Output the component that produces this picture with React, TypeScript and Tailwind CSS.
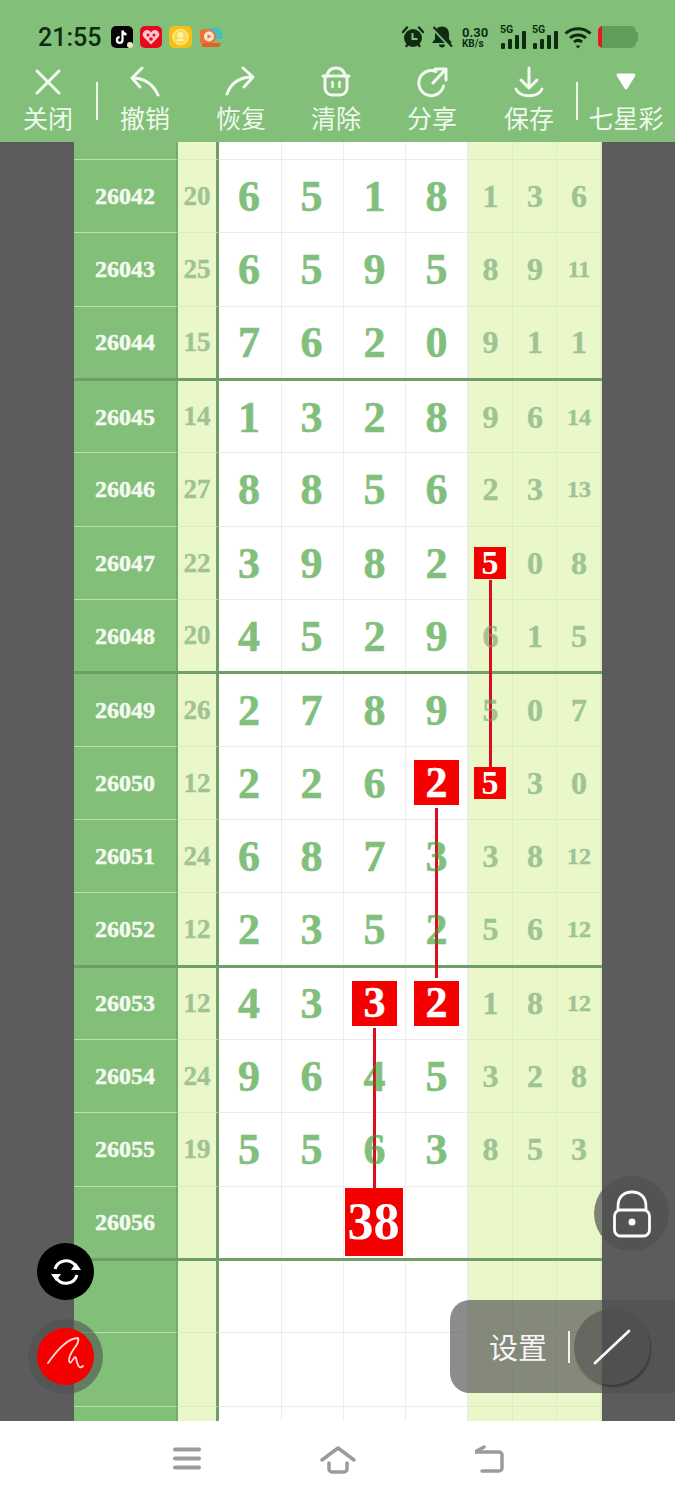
import { clsx } from "clsx";

type Row = {
  issue: string;
  sum: string;
  main: string[];
  side: string[];
  hitMain?: number[];
  hitSide?: number;
  thick?: boolean;
  big?: string;
};

const rows: Row[] = [
  { issue: "26042", sum: "20", main: ["6", "5", "1", "8"], side: ["1", "3", "6"] },
  { issue: "26043", sum: "25", main: ["6", "5", "9", "5"], side: ["8", "9", "11"] },
  { issue: "26044", sum: "15", main: ["7", "6", "2", "0"], side: ["9", "1", "1"], thick: true },
  { issue: "26045", sum: "14", main: ["1", "3", "2", "8"], side: ["9", "6", "14"] },
  { issue: "26046", sum: "27", main: ["8", "8", "5", "6"], side: ["2", "3", "13"] },
  { issue: "26047", sum: "22", main: ["3", "9", "8", "2"], side: ["5", "0", "8"], hitSide: 0 },
  { issue: "26048", sum: "20", main: ["4", "5", "2", "9"], side: ["6", "1", "5"], thick: true },
  { issue: "26049", sum: "26", main: ["2", "7", "8", "9"], side: ["5", "0", "7"] },
  { issue: "26050", sum: "12", main: ["2", "2", "6", "2"], side: ["5", "3", "0"], hitMain: [3], hitSide: 0 },
  { issue: "26051", sum: "24", main: ["6", "8", "7", "3"], side: ["3", "8", "12"] },
  { issue: "26052", sum: "12", main: ["2", "3", "5", "2"], side: ["5", "6", "12"], thick: true },
  { issue: "26053", sum: "12", main: ["4", "3", "3", "2"], side: ["1", "8", "12"], hitMain: [2, 3] },
  { issue: "26054", sum: "24", main: ["9", "6", "4", "5"], side: ["3", "2", "8"] },
  { issue: "26055", sum: "19", main: ["5", "5", "6", "3"], side: ["8", "5", "3"] },
  { issue: "26056", sum: "", main: ["", "", "", ""], side: ["", "", ""], big: "38", thick: true },
  { issue: "", sum: "", main: ["", "", "", ""], side: ["", "", ""] },
  { issue: "", sum: "", main: ["", "", "", ""], side: ["", "", ""] },
];

const mainWidths = ["w-[63px] pr-[2px]", "w-[62px] pr-[2px]", "w-[62px]", "w-[63px] border-r-2 border-r-[#6f9f66]"];
const sideWidths = ["w-[44px]", "w-[44px] pl-px", "w-[45px] pl-px border-r-2 border-r-[#6f9f66]"];

function GridRow({ row, className }: { row: Partial<Row>; className?: string }) {
  const line = row.thick ? "" : "border-b";
  const main = row.main ?? ["", "", "", ""];
  const side = row.side ?? ["", "", ""];
  return (
    <div className={clsx("flex w-[528px]", row.thick && "border-b-[3px] border-b-[#6f9f66]", className)}>
      <div className={clsx("w-[104px] bg-[#82c07a] border-r-2 border-r-[#72a96c] border-b-[#b9dfb3] flex items-center justify-center", line)}>
        <span className="text-[24px] font-bold text-[#f6fbf2] [-webkit-text-stroke:0.4px] [font-family:'Liberation_Serif',serif]">{row.issue}</span>
      </div>
      <div className={clsx("w-[41px] bg-[#e9f7c9] border-r-[3px] border-r-[#6f9f66] border-b-[#dcedbf] flex items-center justify-center", line)}>
        <span className="text-[27px] font-bold text-[#6ea26f] opacity-60 [-webkit-text-stroke:0.4px] [font-family:'Liberation_Serif',serif]">{row.sum}</span>
      </div>
      {main.map((d, i) => {
        const hit = row.hitMain?.includes(i);
        const big = row.big && i === 2;
        return (
          <div key={i} className={clsx(mainWidths[i], "bg-white border-r border-r-[#ececec] border-b-[#ececec] flex items-center justify-center", line)}>
            {hit && (
              <span className="relative z-10 w-[45px] h-[45px] bg-[#f50000] text-white text-[44px] font-bold leading-none flex items-center justify-center [-webkit-text-stroke:0.5px] [font-family:'Liberation_Serif',serif]">
                {d}
              </span>
            )}
            {big && (
              <span className="relative z-10 -left-px w-[58px] h-[68px] bg-[#f50000] text-white text-[52px] font-bold leading-none flex items-center justify-center [font-family:'Liberation_Serif',serif]">
                {row.big}
              </span>
            )}
            {!hit && !big && (
              <span className="relative top-px z-10 text-[44px] font-bold leading-none text-[#2f9626] opacity-60 [-webkit-text-stroke:0.6px] [font-family:'Liberation_Serif',serif]">{d}</span>
            )}
          </div>
        );
      })}
      {side.map((d, i) => {
        const hit = row.hitSide === i;
        return (
          <div key={i} className={clsx(sideWidths[i], "bg-[#e9f7c9] border-r border-r-[#dcedbf] border-b-[#dcedbf] flex items-center justify-center", line)}>
            {hit ? (
              <span className="relative z-10 -left-px w-[32px] h-[32px] pl-px bg-[#f50000] text-white text-[34px] font-bold leading-none flex items-center justify-center [font-family:'Liberation_Serif',serif]">
                {d}
              </span>
            ) : (
              <span
                className={clsx(
                  "relative z-10 font-bold leading-none text-[#6ea26f] opacity-60 [-webkit-text-stroke:0.4px] [font-family:'Liberation_Serif',serif]",
                  d.length > 1 ? "text-[24px]" : "text-[32px]",
                )}
              >
                {d}
              </span>
            )}
          </div>
        );
      })}
    </div>
  );
}

function Signal() {
  return (
    <svg width="26" height="26" viewBox="0 0 26 26" fill="#0f2c12">
      <text x="0" y="9" fontSize="10.5" fontWeight="700" fontFamily="Roboto, sans-serif">5G</text>
      <rect x="1" y="19" width="4" height="6" rx="1" />
      <rect x="8" y="15" width="4" height="10" rx="1" />
      <rect x="15" y="11" width="4" height="14" rx="1" />
      <rect x="22" y="7" width="4" height="18" rx="1" />
    </svg>
  );
}

function StatusBar() {
  return (
    <div className="h-[66px] pt-2 pl-[38px] flex items-center text-[#0f2c12]">
      <span className="text-[25px] font-medium leading-none [font-family:Roboto,sans-serif] w-[73px]">21:55</span>
      {/* app notification icons */}
      <div className="flex items-center gap-[7px]">
        <svg width="22" height="22" viewBox="0 0 22 22">
          <rect width="22" height="22" rx="5" fill="#050505" />
          <path d="M11.5 4.5v9.5a2.8 2.8 0 1 1-2.8-2.8M11.5 4.5c.3 2.4 1.8 3.7 4 3.9" fill="none" stroke="#fff" strokeWidth="2.2" />
          <circle cx="19" cy="19" r="3" fill="#f3e6c4" />
        </svg>
        <svg width="22" height="22" viewBox="0 0 22 22">
          <rect width="22" height="22" rx="5" fill="#e8071d" />
          <path d="M11 18.5 3.8 11.2a4.3 4.3 0 0 1 6-6.1l1.2 1.1 1.2-1.1a4.3 4.3 0 0 1 6 6.1z" fill="#f9c7cc" />
          <circle cx="8" cy="9" r="1.5" fill="#e8071d" />
          <circle cx="14" cy="9" r="1.5" fill="#e8071d" />
          <circle cx="11" cy="13" r="1.8" fill="#e8071d" />
        </svg>
        <svg width="23" height="22" viewBox="0 0 23 22">
          <rect width="23" height="22" rx="5" fill="#f6bf12" />
          <circle cx="11.5" cy="11" r="7.5" fill="#f9d94d" stroke="#fbe88f" strokeWidth="1.5" />
          <circle cx="11.5" cy="9" r="3" fill="#fff0ad" />
          <path d="M7 15c2-3 7-3 9 0" fill="#fff0ad" />
        </svg>
        <svg width="23" height="22" viewBox="0 0 23 22">
          <path d="M8 2h10a5 5 0 0 1 5 5v6H8z" fill="#3cc0c0" />
          <path d="M1 6c0-2 1.500-3 3-3l8 1a7 7 0 0 1 5 7c0 4-3 6-6 6H1z" fill="#ef7433" />
          <circle cx="10" cy="10.500" r="5" fill="#fbe6d6" />
          <path d="M8.500 8v5l4-2.500z" fill="#ef7433" />
          <path d="M3 17h19l-2 4H3z" fill="#e2622a" />
        </svg>
      </div>
      <div className="flex-1" />
      {/* system status icons */}
      <div className="flex items-center pr-[37px]">
        <svg width="24" height="24" viewBox="0 0 24 24" fill="#0f2c12" className="mr-[5px]">
          <circle cx="12" cy="13" r="9" />
          <path d="M2 7 6 2.500M22 7l-4-4.500M5.500 21l2-2.500M18.500 21l-2-2.500" stroke="#0f2c12" strokeWidth="2.400" strokeLinecap="round" />
          <path d="M11.500 8v6h5" fill="none" stroke="#82c07a" strokeWidth="2" />
        </svg>
        <svg width="24" height="24" viewBox="0 0 24 24" fill="#0f2c12" className="mr-[8px]">
          <path d="M12 1.500c4.500 0 7 3 7 7.500v5l3 4H2l3-4V9c0-4.500 2.500-7.500 7-7.500z" />
          <path d="M9 19.500h6a3 3 0 0 1-6 0z" />
          <path d="M3 3l18 19" stroke="#82c07a" strokeWidth="3.500" />
          <path d="M3.500 2 22 21.500" stroke="#0f2c12" strokeWidth="2" />
        </svg>
        <div className="w-[34px] flex flex-col items-start leading-none font-bold [font-family:Roboto,sans-serif]">
          <span className="text-[13px] leading-[13px]">0.30</span>
          <span className="text-[10px] leading-[10px]">KB/s</span>
        </div>
        <div className="ml-[4px] mr-[6px]">
          <Signal />
        </div>
        <Signal />
        <svg width="28" height="24" viewBox="0 0 28 24" fill="none" stroke="#0f2c12" strokeWidth="3" className="ml-[6px]">
          <path d="M1.500 8.500c7-6.500 18-6.500 25 0" />
          <path d="M6 13c4.500-4 11.500-4 16 0" />
          <path d="M10 17c2.500-2 5.500-2 8 0" />
          <path d="M11.500 20.500h5l-2.500 3z" fill="#0f2c12" stroke="none" />
        </svg>
        <div className="ml-[6px] flex items-center">
          <div className="w-[38px] h-[22px] rounded-[5px] bg-[#5f9e58] flex overflow-hidden">
            <div className="w-[4px] bg-[#e8171f]" />
          </div>
          <div className="w-[2px] h-[10px] rounded-r bg-[#5f9e58]" />
        </div>
      </div>
    </div>
  );
}

const iconProps = {
  width: 32,
  height: 32,
  viewBox: "0 0 32 32",
  fill: "none",
  stroke: "#f4faf1",
  strokeWidth: 3,
  strokeLinecap: "round" as const,
  strokeLinejoin: "round" as const,
};

function ToolItem({ label, width, children }: { label: string; width: string; children: React.ReactNode }) {
  return (
    <div className={clsx(width, "flex flex-col items-center")}>
      <div className="h-8">{children}</div>
      <span className="mt-[1px] text-[25px] leading-[36px] whitespace-nowrap text-[#f0f8ec] [font-family:'Noto_Sans_CJK_SC',sans-serif]">
        {label}
      </span>
    </div>
  );
}

function Toolbar() {
  return (
    <div className="h-[76px] flex items-start">
      <ToolItem label="关闭" width="w-[96px]">
        <svg {...iconProps}>
          <path d="M5 5 27 27M27 5 5 27" />
        </svg>
      </ToolItem>
      <div className="w-[2px] h-[38px] mt-4 bg-[#eef7ea]" />
      <ToolItem label="撤销" width="w-[94px]">
        <svg {...iconProps}>
          <path d="M3 12C15 12 24 18 29 29M13 2 3 12l8 9" />
        </svg>
      </ToolItem>
      <ToolItem label="恢复" width="w-[98px]">
        <svg {...iconProps}>
          <path d="M2 28C6 17 15 11 28 11M18 2l10 9-9 10" />
        </svg>
      </ToolItem>
      <ToolItem label="清除" width="w-[92px]">
        <svg {...iconProps}>
          <path d="M7 10C8 4 12 2 16 2s8 2 9 8" />
          <path d="M3 10h26" />
          <path d="M5 10v12a7 7 0 0 0 7 7h8a7 7 0 0 0 7-7V10" />
          <path d="M12.500 16v5M19.500 16v5" strokeWidth="2.500" />
        </svg>
      </ToolItem>
      <ToolItem label="分享" width="w-[100px]">
        <svg {...iconProps}>
          <path d="M20 5.500A12.500 12.500 0 1 0 27.500 20" />
          <path d="M17 17 30 3M19 3h11v11" />
        </svg>
      </ToolItem>
      <ToolItem label="保存" width="w-[94px]">
        <svg {...iconProps}>
          <path d="M16 2v20M8 14l8 8 8-8M3 23c4 9 22 9 26 0" />
        </svg>
      </ToolItem>
      <div className="w-[2px] h-[38px] mt-4 bg-[#eef7ea]" />
      <ToolItem label="七星彩" width="w-[96px]">
        <svg width="32" height="32" viewBox="0 0 32 32" fill="#fff" stroke="#fff" strokeWidth="3" strokeLinejoin="round">
          <path d="M8 9h16l-8 13z" />
        </svg>
      </ToolItem>
    </div>
  );
}

function Floating() {
  return (
    <>
      {/* sync */}
      <div className="absolute left-[37px] top-[1243px] w-[57px] h-[57px] rounded-full bg-black flex items-center justify-center">
        <svg width="34" height="34" viewBox="0 0 34 34" fill="none" stroke="#fff" strokeWidth="3">
          <path d="M6 14A11.500 11.500 0 0 1 26 10" />
          <path d="M28 20A11.500 11.500 0 0 1 8 24" />
          <path d="M22 15h10l-5-7zM12 19H2l5 7z" fill="#fff" stroke="none" />
        </svg>
      </div>
      {/* pen */}
      <div className="absolute left-[28px] top-[1319px] w-[75px] h-[75px] rounded-full bg-[#505050]/60 flex items-center justify-center">
        <div className="w-[57px] h-[57px] rounded-full bg-[#f50000] flex items-center justify-center">
          <svg width="57" height="57" viewBox="0 0 57 57" fill="none" stroke="#ffd9d0" strokeWidth="1.800" strokeLinecap="round" strokeLinejoin="round">
            <path d="M11 35C18 25 30 10 41 10c3 6-10 14-9 23 2 6 5-7 7-3 1 6 3 12 7 8" />
          </svg>
        </div>
      </div>
      {/* lock */}
      <div className="absolute left-[594px] top-[1176px] w-[75px] h-[75px] rounded-full bg-[#505050]/70 flex items-center justify-center">
        <svg width="38" height="48" viewBox="0 0 38 48" fill="none" stroke="#fbfbfb" strokeWidth="2.800">
          <path d="M5 20V16C5 7 11 2 19 2s14 5 14 14v4" />
          <rect x="1.500" y="20" width="35" height="26" rx="6" />
          <circle cx="19" cy="32" r="3.500" fill="#fbfbfb" stroke="none" />
        </svg>
      </div>
      {/* settings */}
      <div className="absolute left-[450px] top-[1300px] w-[225px] h-[93px] rounded-l-[20px] bg-[#505050]/[0.66] flex items-center pl-[39px]">
        <span className="text-[29px] leading-none text-[#f5f5f5] [font-family:'Noto_Sans_CJK_SC',sans-serif]">设置</span>
        <div className="ml-[21px] w-[2px] h-[32px] bg-[#f2f2f2]" />
        <div className="ml-[4px] w-[76px] h-[76px] rounded-full bg-[#4d4d4d]/[0.57] shadow-[1px_2px_2px_rgba(0,0,0,0.35)] flex items-center justify-center">
          <svg width="38" height="36" viewBox="0 0 38 36" fill="none" stroke="#fafafa" strokeWidth="2.800" strokeLinecap="round">
            <path d="M2 34 36 2" />
          </svg>
        </div>
      </div>
    </>
  );
}

export default function App() {
  return (
    <div className="relative w-[675px] h-[1500px] flex flex-col overflow-hidden bg-[#5c5c5c]">
      <header className="h-[142px] bg-[#82c07a]">
        <StatusBar />
        <Toolbar />
      </header>

      <main className="relative h-[1279px] overflow-hidden pl-[74px]">
        <GridRow row={{}} className="h-[18px]" />
        {rows.map((row, i) => (
          <GridRow
            key={i}
            row={row}
            // thick rules sit 1px lower than the row grid
            className={row.thick ? "h-[74.33px]" : rows[i - 1]?.thick ? "h-[72.33px]" : "h-[73.33px]"}
          />
        ))}
        <GridRow row={{}} className="h-[20px]" />

        {/* connecting lines between the hits */}
        <div className="absolute left-[489px] top-[438px] w-[3px] h-[187px] bg-[#d8101c]" />
        <div className="absolute left-[435px] top-[666px] w-[3px] h-[170px] bg-[#d8101c]" />
        <div className="absolute left-[373px] top-[886px] w-[3px] h-[162px] bg-[#d8101c]" />
      </main>

      <nav className="h-[79px] bg-white flex items-center justify-center gap-[119px] pb-[1px]">
        <svg width="32" height="32" viewBox="0 0 32 32" fill="none" stroke="#9b9b9b" strokeWidth="4" strokeLinecap="round">
          <path d="M6 5.500h24M6 14.500h24M6 23.500h24" />
        </svg>
        <svg width="36" height="32" viewBox="0 0 36 32" fill="none" stroke="#9b9b9b" strokeWidth="3.500" strokeLinecap="round" strokeLinejoin="round">
          <path d="M2 16 18 4l16 12" />
          <path d="M9 19v6a3 3 0 0 0 3 3h12a3 3 0 0 0 3-3v-6" />
        </svg>
        <svg width="32" height="32" viewBox="0 0 32 32" fill="none" stroke="#9b9b9b" strokeWidth="3.500" strokeLinecap="round" strokeLinejoin="round">
          <path d="M0 8h24a3 3 0 0 1 3 3v13a3 3 0 0 1-3 3H7" />
          <path d="M9 3 0 8" />
        </svg>
      </nav>

      <Floating />
    </div>
  );
}
